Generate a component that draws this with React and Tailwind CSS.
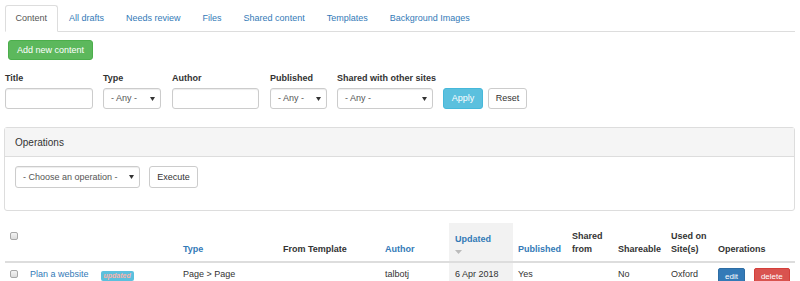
import React from "react";

const tabs = [
  "Content",
  "All drafts",
  "Needs review",
  "Files",
  "Shared content",
  "Templates",
  "Background Images",
];

function Caret() {
  return (
    <svg width="5" height="4" viewBox="0 0 5 4" className="shrink-0">
      <path d="M0 0h5L2.5 4z" fill="#333" />
    </svg>
  );
}

function FakeSelect({ label, width }) {
  return (
    <div
      className={`${width} h-[21px] flex items-center justify-between pl-[7px] pr-[5px] border border-[#ccc] rounded-[3px] bg-white text-[#555] shadow-[inset_0_1px_1px_rgba(0,0,0,0.075)]`}
    >
      <span>{label}</span>
      <Caret />
    </div>
  );
}

function Check() {
  return (
    <span className="block w-[8px] h-[8px] border border-[#a8a8a8] rounded-[2px] bg-gradient-to-b from-[#f4f4f4] to-[#dcdcdc]" />
  );
}

export default function App() {
  return (
    <div
      className="w-[800px] h-[281px] overflow-hidden bg-white text-[#333] text-[9px] leading-[13px] px-[5px]"
      style={{ fontFamily: '"Liberation Sans", Arial, sans-serif' }}
    >
      {/* Tabs */}
      <ul className="flex pt-[5px] border-b border-[#ddd]">
        {tabs.map((t, i) => (
          <li
            key={t}
            className={`mr-[1px] -mb-[1px] h-[27px] flex items-center px-[9.5px] rounded-t-[3px] border ${
              i === 0
                ? "border-[#ddd] border-b-white bg-white text-[#555]"
                : "border-transparent text-[#337ab7]"
            }`}
          >
            {t}
          </li>
        ))}
      </ul>

      <div className="pl-[3px] pt-[8px]">
        <button className="h-[20px] px-[8px] rounded-[3px] bg-[#5cb85c] border border-[#4cae4c] text-white">
          Add new content
        </button>
      </div>

      {/* Filters */}
      <div className="flex items-end mt-[12px] whitespace-nowrap">
        <div className="w-[88px] mr-[10px]">
          <div className="font-bold mb-[3px]">Title</div>
          <div className="w-[88px] h-[21px] border border-[#ccc] rounded-[3px] shadow-[inset_0_1px_1px_rgba(0,0,0,0.075)]" />
        </div>
        <div className="w-[58px] mr-[11px]">
          <div className="font-bold mb-[3px]">Type</div>
          <FakeSelect label="- Any -" width="w-[58px]" />
        </div>
        <div className="w-[87px] mr-[11px]">
          <div className="font-bold mb-[3px]">Author</div>
          <div className="w-[87px] h-[21px] border border-[#ccc] rounded-[3px] shadow-[inset_0_1px_1px_rgba(0,0,0,0.075)]" />
        </div>
        <div className="w-[57px] mr-[10px]">
          <div className="font-bold mb-[3px]">Published</div>
          <FakeSelect label="- Any -" width="w-[57px]" />
        </div>
        <div className="w-[96px] mr-[10px]">
          <div className="font-bold mb-[3px]">Shared with other sites</div>
          <FakeSelect label="- Any -" width="w-[96px]" />
        </div>
        <button className="w-[40px] h-[21px] mr-[5px] rounded-[3px] bg-[#5bc0de] border border-[#46b8da] text-white">
          Apply
        </button>
        <button className="w-[39px] h-[21px] rounded-[3px] bg-white border border-[#ccc] text-[#333]">
          Reset
        </button>
      </div>

      {/* Operations panel */}
      <div className="mt-[18px] -ml-[1px] border border-[#ddd] rounded-[3px]">
        <div className="h-[29px] flex items-center px-[10px] bg-[#f5f5f5] border-b border-[#ddd] text-[10px]">
          Operations
        </div>
        <div className="flex px-[10px] pt-[9px] pb-[22px] gap-[9px]">
          <FakeSelect label="- Choose an operation -" width="w-[125px] h-[22px]" />
          <button className="w-[49px] h-[22px] rounded-[3px] bg-white border border-[#ccc]">
            Execute
          </button>
        </div>
      </div>

      {/* Content table */}
      <table className="mt-[12px] w-[790px] table-fixed border-collapse">
        <colgroup>
          <col className="w-[20px]" />
          <col className="w-[153px]" />
          <col className="w-[100px]" />
          <col className="w-[102px]" />
          <col className="w-[69px]" />
          <col className="w-[64px]" />
          <col className="w-[54px]" />
          <col className="w-[46px]" />
          <col className="w-[53px]" />
          <col className="w-[47px]" />
          <col className="w-[82px]" />
        </colgroup>
        <thead>
          <tr className="border-b-2 border-[#ddd] font-bold text-left">
            <th className="align-top px-[5px] pt-[9px]">
              <Check />
            </th>
            <th className="px-[5px]" />
            <th className="align-bottom px-[5px] pb-[5px] text-[#337ab7]">Type</th>
            <th className="align-bottom px-[5px] pb-[5px]">From Template</th>
            <th className="align-bottom px-[5px] pb-[5px] text-[#337ab7]">Author</th>
            <th className="align-bottom pl-[6px] pr-[4px] pb-[5px] bg-[#f2f2f2] text-[#337ab7]">
              <div>Updated</div>
              <svg width="7" height="4" viewBox="0 0 7 4" className="mt-[4px] mb-[2px]">
                <path d="M0 0h7L3.5 4z" fill="#bbb" />
              </svg>
            </th>
            <th className="align-bottom px-[5px] pb-[5px] text-[#337ab7]">Published</th>
            <th className="align-bottom px-[5px] pb-[5px] pt-[7px]">
              Shared
              <br />
              from
            </th>
            <th className="align-bottom px-[5px] pb-[5px]">Shareable</th>
            <th className="align-bottom px-[5px] pb-[5px]">
              Used on
              <br />
              Site(s)
            </th>
            <th className="align-bottom px-[5px] pb-[5px]">Operations</th>
          </tr>
        </thead>
        <tbody>
          <tr>
            <td className="align-top px-[5px] pt-[7px]">
              <Check />
            </td>
            <td className="align-top px-[5px] pt-[5px]">
              <span className="text-[#337ab7]">Plan a website</span>
              <span className="inline-block ml-[12px] px-[3px] h-[10px] leading-[10px] align-[-1px] rounded-[2px] bg-[#5bc0de] text-[#f7b3ab] text-[7px] italic font-bold">
                updated
              </span>
            </td>
            <td className="align-top px-[5px] pt-[5px]">Page &gt; Page</td>
            <td className="align-top px-[5px] pt-[5px]" />
            <td className="align-top px-[5px] pt-[5px]">talbotj</td>
            <td className="align-top pl-[6px] pr-[4px] pt-[5px] bg-[#f2f2f2]">6 Apr 2018</td>
            <td className="align-top px-[5px] pt-[5px]">Yes</td>
            <td className="align-top px-[5px] pt-[5px]" />
            <td className="align-top px-[5px] pt-[5px]">No</td>
            <td className="align-top px-[5px] pt-[5px]">Oxford</td>
            <td className="align-top px-[5px] pt-[5px] h-[30px]">
              <div className="flex gap-[9px]">
                <span className="h-[17px] px-[6px] flex items-center rounded-[2px] bg-[#337ab7] border border-[#2e6da4] text-white text-[8px]">
                  edit
                </span>
                <span className="h-[17px] px-[6px] flex items-center rounded-[2px] bg-[#d9534f] border border-[#d43f3a] text-white text-[8px]">
                  delete
                </span>
              </div>
            </td>
          </tr>
        </tbody>
      </table>
    </div>
  );
}
